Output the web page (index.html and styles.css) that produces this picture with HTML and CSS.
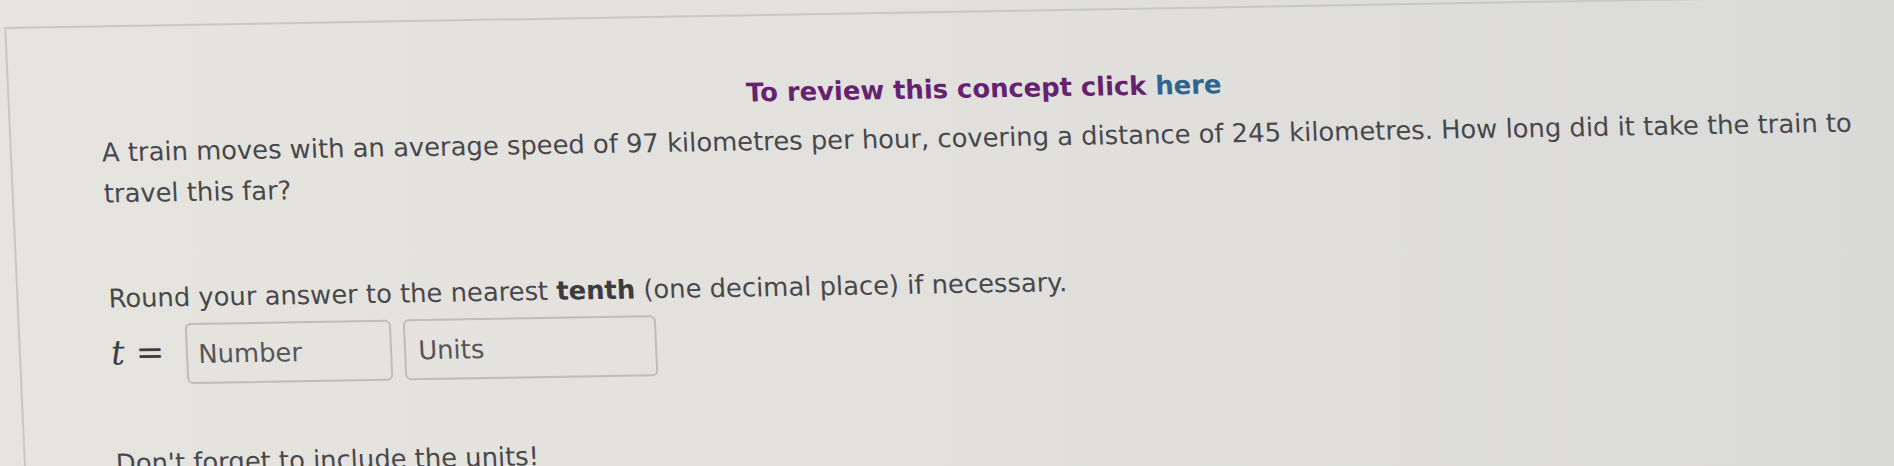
FILE: index.html
```html
<!DOCTYPE html>
<html lang="en">
<head>
<meta charset="utf-8">
<title>Question</title>
<link rel="stylesheet" href="styles.css">
</head>
<body>
  <div class="screen">
    <section class="card">
      <h2 class="review">To review this concept click <a class="here" href="#">here</a></h2>
      <p class="question">A train moves with an average speed of 97 kilometres per hour, covering a distance of 245 kilometres. How long did it take the train to travel this far?</p>
      <p class="instr">Round your answer to the nearest <b>tenth</b> (one decimal place) if necessary.</p>
      <div class="answer">
        <span class="math"><i class="var">t</i><span class="eq">=</span></span>
        <input class="field num" type="text" placeholder="Number">
        <input class="field units" type="text" placeholder="Units">
      </div>
      <p class="note">Don't forget to include the units!</p>
    </section>
  </div>
</body>
</html>
```

FILE: styles.css
```css
html, body {
  margin: 0;
  height: 100%;
  overflow: hidden;
}

body {
  background: linear-gradient(90deg, #e6e4df 0%, #e2e1dd 45%, #dadad9 100%);
  font-family: "DejaVu Sans", Verdana, sans-serif;
  color: #48484c;
}

.screen {
  transform: matrix(1, -0.017, 0.045, 1, 0, 0);
  transform-origin: 0 0;
  padding: 27px 0 0 3px;
}

.card {
  border-top: 2px solid #c7c7c4;
  border-left: 2px solid #c7c7c4;
  padding: 0 31px 0 90px;
  min-height: 700px;
}

.review {
  margin: 0;
  padding-top: 61px;
  font-size: 25.8px;
  line-height: 31px;
  font-weight: bold;
  text-align: center;
  color: #66226f;
}

.here {
  color: #2d6490;
  text-decoration: none;
}

.question,
.instr,
.note {
  font-size: 25.8px;
  line-height: 41px;
  margin: 0;
}

.question {
  margin-top: 12.5px;
}

.instr {
  margin-top: 64px;
}

.instr b {
  color: #3c3c40;
}

.answer {
  display: flex;
  align-items: baseline;
  margin-top: 5.5px;
}

.math {
  font-family: "DejaVu Serif", "Liberation Serif", serif;
  font-size: 34px;
  color: #3e3e42;
  margin-right: 22px;
}

.var {
  font-style: italic;
}

.eq {
  margin-left: 11px;
}

.field {
  box-sizing: border-box;
  height: 61px;
  border: 2px solid #bdbdb9;
  border-radius: 6px;
  background: transparent;
  font-family: "DejaVu Sans", Verdana, sans-serif;
  font-size: 25.8px;
  color: #48484c;
  outline: none;
}

.field::placeholder {
  color: #56565a;
  opacity: 1;
}

.num {
  width: 206px;
  padding: 0 0 0 10px;
}

.units {
  width: 253px;
  margin-left: 12px;
  padding: 0 0 0 12px;
}

.note {
  margin-top: 57.5px;
}
```
